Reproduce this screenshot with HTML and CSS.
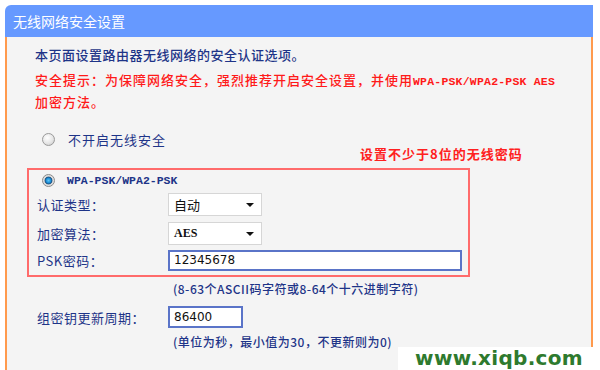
FILE: index.html
```html
<!DOCTYPE html>
<html lang="zh-CN">
<head>
<meta charset="utf-8">
<title>无线网络安全设置</title>
<link rel="stylesheet" href="styles.css">
</head>
<body>
<div class="panel">
  <div class="panel-head">无线网络安全设置</div>
  <div class="panel-body">
    <p class="intro">本页面设置路由器无线网络的安全认证选项。</p>
    <p class="warn">安全提示：为保障网络安全，强烈推荐开启安全设置，并使用<span class="mono">WPA-PSK/WPA2-PSK AES</span></p>
    <p class="warn">加密方法。</p>

    <div class="radio-row first">
      <span class="radio"></span>
      <span class="radio-label">不开启无线安全</span>
    </div>

    <div class="note">设置不少于8位的无线密码</div>

    <div class="redbox">
      <div class="radio-row inbox">
        <span class="radio checked"></span>
        <span class="radio-label mono-label">WPA-PSK/WPA2-PSK</span>
      </div>
      <div class="field-row r1">
        <span class="label">认证类型：</span>
        <span class="select"><span class="sel-text">自动</span><span class="caret"></span></span>
      </div>
      <div class="field-row r2">
        <span class="label">加密算法：</span>
        <span class="select"><span class="sel-text mono-small">AES</span><span class="caret"></span></span>
      </div>
      <div class="field-row r3">
        <span class="label">PSK密码：</span>
        <span class="input wide">12345678</span>
      </div>
    </div>

    <p class="hint">(8-63个ASCII码字符或8-64个十六进制字符)</p>

    <div class="field-row group">
      <span class="label">组密钥更新周期：</span>
      <span class="input short">86400</span>
    </div>

    <p class="hint hint2">(单位为秒，最小值为30，不更新则为0)</p>
  </div>
</div>
<div class="watermark">www.xiqb.com</div>
</body>
</html>
```
FILE: styles.css
```css
html, body {
  margin: 0;
  padding: 0;
  background: #ffffff;
  width: 600px;
  height: 370px;
  overflow: hidden;
  font-family: "Noto Sans CJK SC", "DejaVu Sans", sans-serif;
}

.panel {
  margin: 5px 0 0 5px;
  width: 588px;
}

.panel-head {
  height: 32px;
  line-height: 32px;
  background: #6699ff;
  color: #ffffff;
  font-size: 14px;
  padding-left: 8px;
  border-top-left-radius: 6px;
  box-sizing: border-box;
}

.panel-body {
  position: relative;
  height: 333px;
  background: #f4f4f4;
  border-left: 2px solid #ff9a4d;
  border-right: 2px solid #ff9a4d;
  box-sizing: border-box;
  padding: 8px 0 0 20px;
  color: #1e3488;
}

p {
  margin: 0;
}

.intro {
  padding-left: 8px;
  font-size: 13px;
  font-weight: 500;
  letter-spacing: 0.5px;
  line-height: 20px;
  margin-bottom: 5px;
}

.warn {
  padding-left: 8px;
  font-size: 13px;
  font-weight: 500;
  letter-spacing: 1px;
  line-height: 20px;
  color: #ff1a1a;
}

.mono {
  font-family: "Liberation Mono", monospace;
  font-size: 11.5px;
  font-weight: bold;
  letter-spacing: 0.2px;
}

.radio-row {
  display: flex;
  align-items: center;
  height: 22px;
}

.radio-row.first {
  margin-top: 16px;
  padding-left: 15px;
}

.radio-row.inbox {
  height: 20px;
  padding-left: 13px;
}

.radio {
  width: 11px;
  height: 11px;
  border-radius: 50%;
  border: 1px solid #9a9a9a;
  background: radial-gradient(circle at 40% 35%, #ffffff 0%, #e6e6e6 55%, #c4c4c4 100%);
  flex: none;
}

.radio.checked {
  background: radial-gradient(circle at 50% 50%, #5fc4f5 0%, #1b8fd6 30%, #1a4f80 45%, #d8d8d8 55%, #f4f4f4 100%);
  border-color: #8a8a8a;
}

.radio-label {
  margin-left: 13px;
  font-size: 13px;
  letter-spacing: 1px;
}

.mono-label {
  margin-left: 12px;
  font-family: "Liberation Mono", monospace;
  font-size: 11.5px;
  font-weight: bold;
  letter-spacing: 0;
}

.note {
  position: absolute;
  left: 353px;
  top: 107px;
  color: #ff2020;
  font-size: 13px;
  font-weight: bold;
  letter-spacing: 1px;
}

.redbox {
  margin-top: 18px;
  width: 443px;
  height: 109px;
  border: 2px solid #ff6b6b;
  box-sizing: border-box;
  padding-top: 0;
}

.field-row {
  display: flex;
  align-items: center;
}

.label {
  width: 131px;
  flex: none;
  padding-left: 8px;
  font-size: 13px;
  letter-spacing: 0.5px;
}

.r1 { margin-top: 3px; }
.r2 { margin-top: 6px; }
.r3 { margin-top: 5px; }

.select {
  width: 94px;
  height: 23px;
  box-sizing: border-box;
  background: #ffffff;
  border: 1px solid #d6d6d6;
  display: flex;
  align-items: center;
  justify-content: space-between;
  padding: 0 7px 0 5px;
  color: #111111;
  font-size: 13px;
}

.mono-small {
  font-family: "Liberation Serif", serif;
  font-size: 12px;
  font-weight: bold;
}

.caret {
  width: 0;
  height: 0;
  border-left: 4px solid transparent;
  border-right: 4px solid transparent;
  border-top: 4px solid #111111;
}

.input {
  height: 21px;
  box-sizing: border-box;
  background: #ffffff;
  border: 2px solid #5a74c8;
  padding-left: 4px;
  color: #111111;
  font-family: "DejaVu Sans", sans-serif;
  font-size: 12px;
  line-height: 17px;
}

.input.wide {
  width: 294px;
}

.input.short {
  width: 75px;
  height: 22px;
  line-height: 18px;
}

.hint {
  margin-left: 146px;
  font-size: 12px;
  line-height: 18px;
  margin-top: 3px;
  letter-spacing: 0.5px;
  font-weight: 500;
}

.group {
  margin-top: 7px;
  height: 24px;
}

.group .label {
  padding-left: 10px;
  box-sizing: border-box;
  width: 141px;
}

.hint2 {
  margin-top: 4px;
}

.watermark {
  position: absolute;
  left: 398px;
  top: 347px;
  width: 202px;
  height: 23px;
  background: #ffffff;
  color: #2e7a2e;
  font-family: "DejaVu Sans", sans-serif;
  font-weight: bold;
  font-size: 20px;
  line-height: 23px;
  text-align: center;
  letter-spacing: 0.3px;
}
```
